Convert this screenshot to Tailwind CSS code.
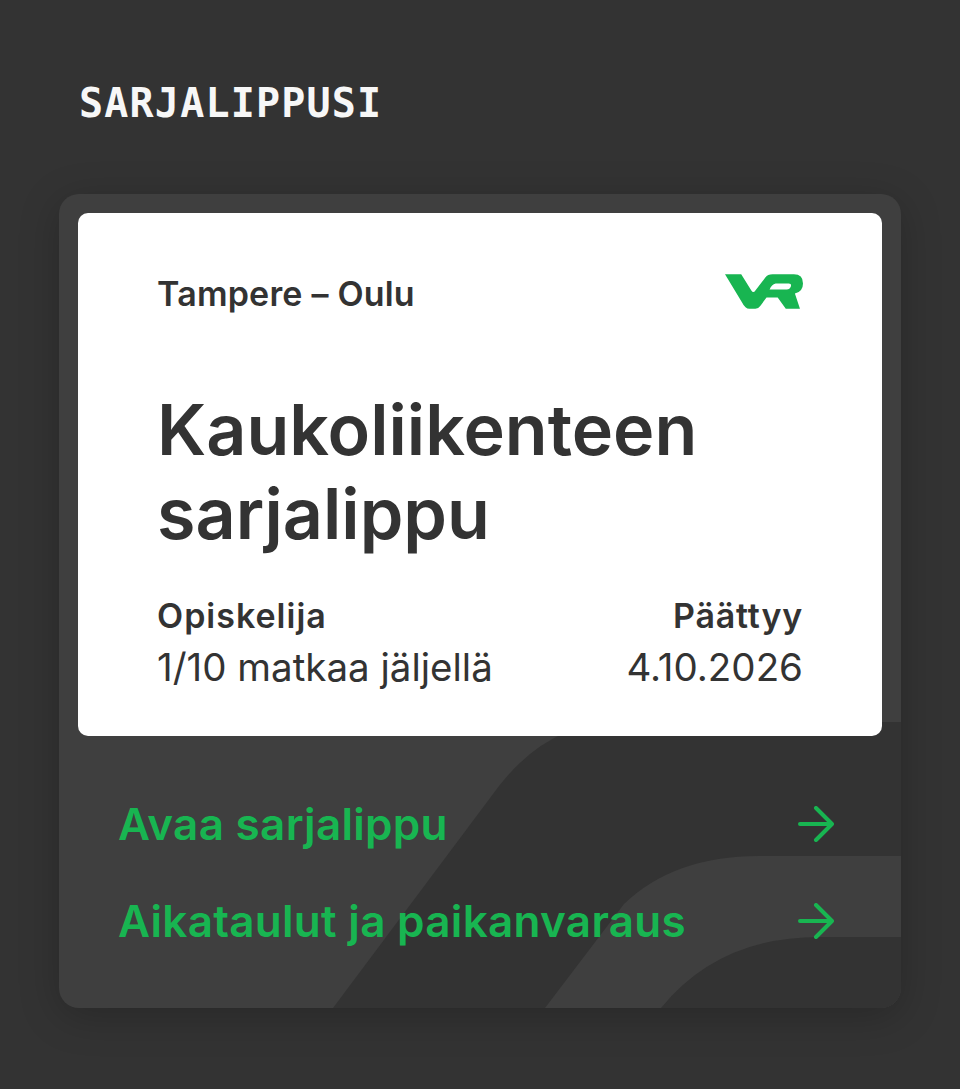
<!DOCTYPE html>
<html lang="fi">
<head>
<meta charset="utf-8">
<script src="https://cdn.jsdelivr.net/npm/@tailwindcss/browser@4"></script>
</head>
<body class="m-0 h-[1089px] w-[960px] overflow-hidden bg-[#333333] font-['Inter',sans-serif] text-[#333333]">
<main class="flex flex-col px-[59px] pt-[80px]">
  <h1 class="ml-[20px] h-[114px] font-['DejaVu_Sans_Mono',monospace] text-[40px] leading-[46px] font-bold tracking-[1.2px] text-[#f7f7f7]">SARJALIPPUSI</h1>
  <section class="relative h-[814px] w-[842px] overflow-hidden rounded-[20px] bg-[#3f3f3f] p-[19px] shadow-[0_8px_40px_rgba(0,0,0,0.22)]">
    <svg class="absolute inset-0" width="842" height="814" viewBox="0 0 842 814" fill="none" aria-hidden="true">
      <path d="M274 814 L440 592 Q490 528 560 528 L842 528 L842 814 Z" fill="#333333"/>
      <path d="M486 814 L565 710 Q615 662 700 662 L842 662 L842 743 L760 743 Q660 743 602 814 Z" fill="#3f3f3f"/>
    </svg>
    <div class="relative flex h-[523px] flex-col rounded-[10px] bg-white px-[79px] pt-[59px]">
      <div class="flex items-start justify-between">
        <p class="text-[34px] leading-[44px] font-semibold tracking-[0.2px]">Tampere – Oulu</p>
        <svg class="mt-[2px]" width="78" height="35" viewBox="0 0 77 34" aria-hidden="true">
          <path fill-rule="evenodd" d="M0 0 H16 L26 16 Q28 19 30 16 L40 3 Q42 0 47 0 H68 Q77 0 77 9 Q77 17 69 19 L74 34 H60 L52 23 H41 L35 31 Q33 34 30 34 H24 Q20 34 17 28 Z M50 9 H63 Q66 9 65 12 Q64 15 61 15 H44 Q46 10 50 9 Z" fill="#18b551"/>
        </svg>
      </div>
      <h2 class="mt-[72px] text-[70px] leading-[84px] font-semibold">Kaukoliikenteen<br>sarjalippu</h2>
      <div class="mt-[34px] flex items-start justify-between">
        <div>
          <p class="text-[34px] leading-[52px] font-semibold tracking-[1px]">Opiskelija</p>
          <p class="text-[38.5px] leading-[50px]">1/10 matkaa jäljellä</p>
        </div>
        <div class="text-right">
          <p class="text-[34px] leading-[52px] font-semibold tracking-[0.8px]">Päättyy</p>
          <p class="text-[38.5px] leading-[50px]">4.10.2026</p>
        </div>
      </div>
    </div>
    <nav class="relative mt-[58px] flex flex-col gap-[37px] pl-[40px] pr-[48px] text-[44px] leading-[60px] font-semibold tracking-[0.3px] text-[#18b551]">
      <a class="flex items-center justify-between">Avaa sarjalippu
        <svg width="36" height="36" viewBox="0 0 36 36" fill="none" stroke="currentColor" stroke-width="4" stroke-linecap="round" stroke-linejoin="round" aria-hidden="true"><path d="M2 18 H33 M18 2 L34 18 L18 34"/></svg>
      </a>
      <a class="flex items-center justify-between">Aikataulut ja paikanvaraus
        <svg width="36" height="36" viewBox="0 0 36 36" fill="none" stroke="currentColor" stroke-width="4" stroke-linecap="round" stroke-linejoin="round" aria-hidden="true"><path d="M2 18 H33 M18 2 L34 18 L18 34"/></svg>
      </a>
    </nav>
  </section>
</main>
</body>
</html>
